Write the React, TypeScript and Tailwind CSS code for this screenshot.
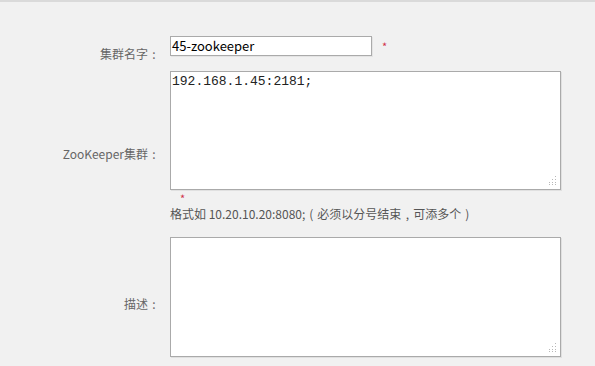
import React from "react";

const Grip = () => (
  <svg
    className="absolute right-[3px] bottom-[3px] pointer-events-none"
    width="10"
    height="10"
    viewBox="0 0 10 10"
  >
    {[
      [8, 0],
      [8, 3],
      [5, 3],
      [8, 6],
      [5, 6],
      [2, 6],
      [8, 8],
      [5, 8],
      [2, 8],
    ].map(([x, y], i) => (
      <rect key={i} x={x} y={y} width="1" height="1" fill="#b8b8b8" />
    ))}
  </svg>
);

const P = ({ children }: { children: React.ReactNode }) => (
  <span className="inline-block w-[12px] text-center">{children}</span>
);

const Label = ({ children }: { children: React.ReactNode }) => (
  <div className="w-[160px] shrink-0 flex items-center justify-end text-[12px] leading-[16px] text-[#666]">
    <span>
      {children}
      <P>:</P>
    </span>
  </div>
);

export default function App() {
  return (
    <div
      className="w-[595px] h-[366px] overflow-hidden bg-[#f1f1f1] border-t-2 border-[#dadada]"
      style={{ fontFamily: '"Noto Sans CJK SC", "Noto Sans", sans-serif' }}
    >
      <div className="pt-[34px] flex flex-col">
        {/* Row 1 */}
        <div className="flex">
          <Label>集群名字</Label>
          <div className="ml-[10px] pb-[15px] flex items-center">
            <div className="w-[202px] h-[20px] bg-white border border-[#aaaaaa] shadow-[1px_1px_0_#e4e4e4] flex items-center pl-[1px] text-[13px] text-black leading-[16px]">
              45-zookeeper
            </div>
            <span className="ml-[10px] text-[11px] text-[#d0304a] leading-[12px]">*</span>
          </div>
        </div>

        {/* Row 2 */}
        <div className="flex">
          <Label>ZooKeeper集群</Label>
          <div className="ml-[10px] pb-[15px] flex flex-col">
            <div className="relative w-[391px] h-[119px] bg-white border border-[#aaaaaa] shadow-[1px_1px_0_#e0e0e0]">
              <div
                className="pt-[2px] pl-[1px] text-[13px] leading-[15px] text-[#222]"
                style={{ fontFamily: '"Liberation Mono", monospace' }}
              >
                192.168.1.45:2181;
              </div>
              <Grip />
            </div>
            <div className="h-[14px] pl-[10px] pt-[2px] text-[11px] leading-[12px] text-[#d0304a]">*</div>
            <div className="mt-[2px] text-[12px] leading-[16px] text-[#555] whitespace-nowrap">
              格式如 10.20.10.20:8080;<P>(</P>必须以分号结束<P>,</P>可添多个<P>)</P>
            </div>
          </div>
        </div>

        {/* Row 3 */}
        <div className="flex">
          <Label>描述</Label>
          <div className="ml-[10px] pb-[14px]">
            <div className="relative w-[391px] h-[120px] bg-white border border-[#aaaaaa] shadow-[1px_1px_0_#e0e0e0]">
              <Grip />
            </div>
          </div>
        </div>
      </div>
    </div>
  );
}
